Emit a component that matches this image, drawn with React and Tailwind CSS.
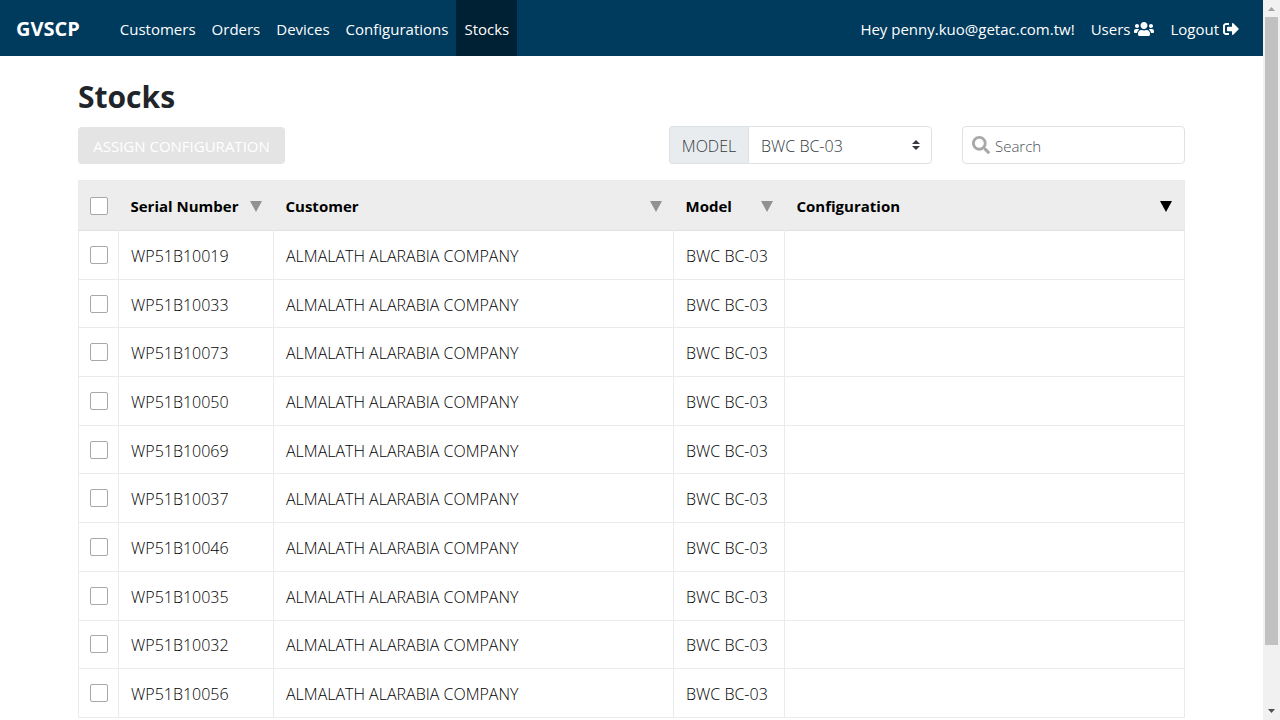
import React from "react";
import { FaUsers, FaSignOutAlt, FaSearch } from "react-icons/fa";

const NAV = ["Customers", "Orders", "Devices", "Configurations", "Stocks"];

const SERIALS = [
  "WP51B10019",
  "WP51B10033",
  "WP51B10073",
  "WP51B10050",
  "WP51B10069",
  "WP51B10037",
  "WP51B10046",
  "WP51B10035",
  "WP51B10032",
  "WP51B10056",
];

const COLUMNS = [
  { name: "Serial Number", active: false },
  { name: "Customer", active: false },
  { name: "Model", active: false },
  { name: "Configuration", active: true },
];

function Navbar() {
  return (
    <header className="flex h-14 items-stretch bg-[#003a5d] pl-4 pr-4 text-white">
      <a href="#home" className="flex items-center pt-0.5 text-xl font-bold">
        GVSCP
      </a>
      <nav className="ml-8 flex items-stretch">
        {NAV.map((item) => (
          <a
            key={item}
            href={"#" + item.toLowerCase()}
            aria-current={item === "Stocks" ? "page" : undefined}
            className={
              "flex items-center px-2 pt-0.5 " +
              (item === "Stocks" ? "bg-[#002033]" : "")
            }
          >
            {item}
          </a>
        ))}
      </nav>
      <div className="ml-auto flex items-center pt-0.5">
        <span className="px-2">Hey penny.kuo@getac.com.tw!</span>
        <a href="#users" className="flex items-center gap-1 px-2">
          Users <FaUsers className="h-4 w-5" />
        </a>
        <a href="#logout" className="flex items-center gap-1 px-2">
          Logout <FaSignOutAlt className="size-4" />
        </a>
      </div>
    </header>
  );
}

function Check({ label }) {
  return (
    <input
      type="checkbox"
      aria-label={label}
      className="mx-auto block size-[18px] appearance-none rounded-xs border border-[#a8a8a8] bg-white"
    />
  );
}

function Toolbar() {
  return (
    <div className="mt-2 flex items-center">
      <button
        type="button"
        disabled
        className="h-[37px] w-[207px] whitespace-nowrap rounded-sm bg-[#e4e4e4] pt-0.5 text-white"
      >
        ASSIGN CONFIGURATION
      </button>
      <div className="ml-auto flex h-[38px] text-base font-light text-[#343a40]">
        <label
          htmlFor="model"
          className="flex w-[79px] items-center justify-center rounded-l-sm border border-r-0 border-[#dee2e6] bg-[#e9ecef] pt-0.5"
        >
          MODEL
        </label>
        <div className="relative w-[184px]">
          <select
            id="model"
            className="h-full w-full appearance-none rounded-r-sm border border-[#dee2e6] bg-white pl-3 pt-0.5"
          >
            <option>BWC BC-03</option>
          </select>
          <svg
            viewBox="0 0 4 5"
            className="pointer-events-none absolute right-3 top-3.5 h-2.5 w-2"
            aria-hidden="true"
          >
            <path fill="#343a40" d="M2 0L0 2h4zm0 5L0 3h4z" />
          </svg>
        </div>
      </div>
      <div className="relative ml-[30px] h-[38px] w-[223px]">
        <FaSearch className="pointer-events-none absolute left-2.5 top-2.5 size-[18px] text-[#a8a8a8]" />
        <input
          type="search"
          aria-label="Search"
          placeholder="Search"
          className="h-full w-full rounded-sm border border-[#dee2e6] bg-transparent pl-8 pt-0.5 font-light placeholder:text-[#495057]"
        />
      </div>
    </div>
  );
}

function StockTable() {
  return (
    <table className="mt-4 h-[538px] w-full table-fixed border-collapse border border-[#e9ecef]">
      <colgroup>
        <col className="w-10" />
        <col className="w-[155px]" />
        <col />
        <col className="w-[111px]" />
        <col />
      </colgroup>
      <thead>
        <tr className="h-[50px] border-b border-[#dee2e6] bg-[#ededed] text-black">
          <th scope="col">
            <Check label="Select all" />
          </th>
          {COLUMNS.map((c) => (
            <th key={c.name} scope="col" className="px-3 text-left font-bold">
              <button
                type="button"
                className="flex w-full items-center justify-between whitespace-nowrap"
              >
                {c.name}
                <svg
                  viewBox="0 0 12 11"
                  className={"mt-0.5 h-[11px] w-3 " + (c.active ? "text-black" : "text-[#919191]")}
                  aria-hidden="true"
                >
                  <path fill="currentColor" d="M0 0h12L6 11z" />
                </svg>
              </button>
            </th>
          ))}
        </tr>
      </thead>
      <tbody>
        {SERIALS.map((s) => (
          <tr key={s} className="h-12 border-b border-[#e9ecef] text-base font-light text-black">
            <td className="border-r border-[#e9ecef]">
              <Check label={"Select " + s} />
            </td>
            <td className="border-r border-[#e9ecef] px-3 pt-0.5">{s}</td>
            <td className="border-r border-[#e9ecef] px-3 pt-0.5">ALMALATH ALARABIA COMPANY</td>
            <td className="border-r border-[#e9ecef] px-3 pt-0.5">BWC BC-03</td>
            <td className="px-3"></td>
          </tr>
        ))}
      </tbody>
    </table>
  );
}

function ScrollTrack() {
  return (
    <div className="flex w-[17px] shrink-0 flex-col items-center bg-[#f1f1f1]" aria-hidden="true">
      <svg viewBox="0 0 17 17" className="size-[17px] shrink-0">
        <path fill="#a3a3a3" d="M5 11h7L8.500 7z" />
      </svg>
      <div className="w-[13px] grow bg-[#c1c1c1]" />
      <div className="h-[58px] shrink-0" />
      <svg viewBox="0 0 17 17" className="size-[17px] shrink-0">
        <path fill="#505050" d="M5 6h7L8.500 10z" />
      </svg>
    </div>
  );
}

export default function App() {
  return (
    <div className="flex h-screen bg-white font-['Open_Sans','Noto_Sans',sans-serif] text-[15px] leading-6">
      <div className="min-w-0 flex-1 overflow-hidden">
        <Navbar />
        <main className="mx-auto max-w-[1107px] pt-5">
          <h1 className="text-[30px] font-bold leading-[42px] text-[#212529]">Stocks</h1>
          <Toolbar />
          <StockTable />
        </main>
      </div>
      <ScrollTrack />
    </div>
  );
}
